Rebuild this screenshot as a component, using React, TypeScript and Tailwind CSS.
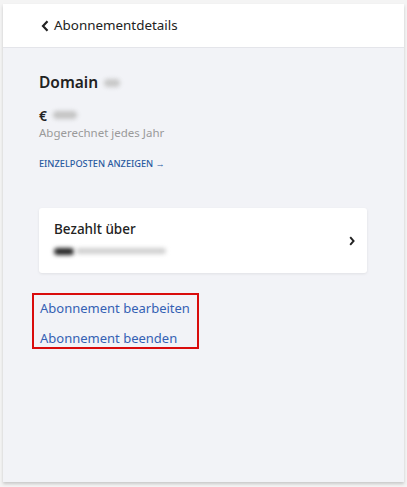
import React from "react";

const ChevronLeft = () => (
  <svg width="8" height="12" viewBox="0 0 8 12" className="shrink-0">
    <path d="M6.5 1.2 L2 6 L6.5 10.8" fill="none" stroke="#222" strokeWidth="2.2" />
  </svg>
);

const ChevronRight = () => (
  <svg width="6" height="10" viewBox="0 0 6 10" className="shrink-0">
    <path d="M1.2 1.2 L4.6 5 L1.2 8.8" fill="none" stroke="#222" strokeWidth="1.9" />
  </svg>
);

const Blur = ({ className }: { className: string }) => (
  <span className={`inline-block rounded-full blur-[2px] ${className}`} />
);

export default function App() {
  return (
    <div
      className="w-[407px] h-[487px] bg-[#f4f4f4] pt-[4px] pl-[3px] pr-[3px] pb-[5px] text-[#222]"
      style={{ fontFamily: '"Noto Sans", "Open Sans", sans-serif' }}
    >
      <div className="h-full flex flex-col bg-[#f2f3f7] shadow-[0_2px_3px_rgba(0,0,0,0.18)]">
        <div className="h-[44px] bg-white border-b border-[#e4e5ea] flex items-center gap-[5px] pl-[38px]">
          <ChevronLeft />
          <span className="text-[13.4px] leading-none">Abonnementdetails</span>
        </div>

        <div className="flex flex-col px-[36px] pt-[25px]">
          <div className="flex items-center gap-[6px] h-[20px]">
            <span className="text-[15.5px] font-semibold">Domain</span>
            <Blur className="w-[16px] h-[8px] bg-[#c8c8c8]" />
          </div>
          <div className="flex items-center gap-[6px] mt-[14px] h-[16px]">
            <span className="text-[14px] font-semibold">€</span>
            <Blur className="w-[24px] h-[8px] bg-[#c4c4c4]" />
          </div>
          <div className="text-[11.5px] text-[#9a9a9a] mt-[2px] leading-[16px]">
            Abgerechnet jedes Jahr
          </div>
          <div className="text-[9.2px] text-[#2a5aa0] font-medium mt-[16px] leading-[14px]">
            EINZELPOSTEN ANZEIGEN →
          </div>

          <div className="mt-[37px] w-[328px] h-[65px] bg-white rounded-[3px] shadow-[0_1px_3px_rgba(0,0,0,0.08)] flex items-center justify-between pl-[15px] pr-[12px]">
            <div className="self-start flex flex-col gap-[8px] pt-[12px]">
              <span className="text-[13.5px] font-medium leading-[18px]">Bezahlt über</span>
              <div className="flex items-center gap-[2px] h-[10px]">
                <Blur className="w-[20px] h-[7px] bg-[#222]" />
                <Blur className="w-[90px] h-[6px] bg-[#cfcfcf]" />
              </div>
            </div>
            <ChevronRight />
          </div>

          <div className="mt-[20px] -ml-[7px] w-[167px] border-2 border-[#d90c0c] flex flex-col gap-[12px] pl-[6px] pt-[4px] whitespace-nowrap">
            <span className="text-[13px] text-[#3461b4] leading-[18px]">Abonnement bearbeiten</span>
            <span className="text-[13px] text-[#3461b4] leading-[18px]">Abonnement beenden</span>
          </div>
        </div>
      </div>
    </div>
  );
}
